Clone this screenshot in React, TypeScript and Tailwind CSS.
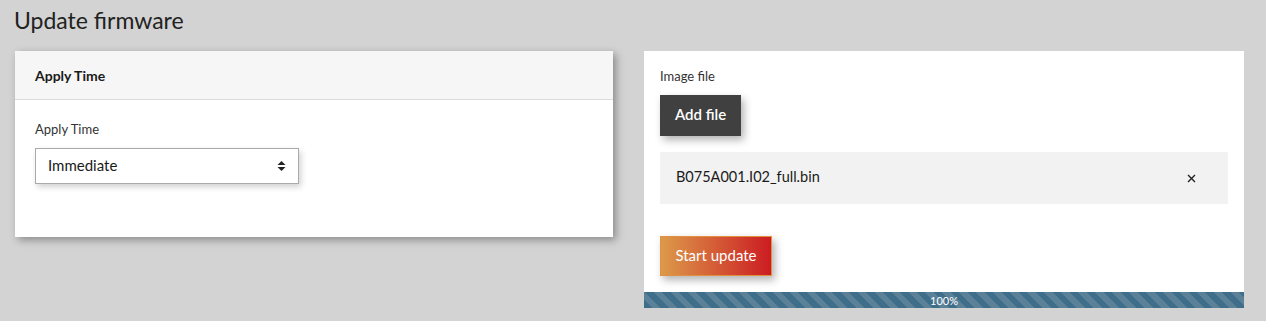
import React from "react";

export default function App() {
  return (
    <div className="w-[1266px] h-[321px] bg-[#d3d3d3] font-['Lato','Noto_Sans',sans-serif] text-[#1a1a1a] overflow-hidden">
      <h1 className="pl-[14px] pt-[5px] h-[51px] text-[23px] leading-[30px] text-[#222]">Update firmware</h1>
      <div className="flex items-start pl-[15px] gap-[31px]">
        <div className="w-[598px] h-[186px] bg-white shadow-[3px_3px_8px_rgba(0,0,0,0.35)] flex flex-col">
          <div className="h-[49px] bg-[#f6f6f6] border-b border-[#dcdcdc] flex items-center pl-[20px] text-[14px] font-bold">
            Apply Time
          </div>
          <div className="pl-[20px] pt-[21px]">
            <div className="text-[13px] text-[#333] leading-[16px]">Apply Time</div>
            <div className="mt-[11px] w-[264px] h-[36px] border border-[#aaa] bg-white shadow-[2px_3px_6px_rgba(0,0,0,0.18)] flex items-center justify-between pl-[12px] pr-[12px] pb-[2px] text-[15px]">
              <span>Immediate</span>
              <svg width="9" height="12" viewBox="0 0 9 12" className="mt-[2px]">
                <path d="M4.5 1 L8.5 5 H0.5 Z" fill="#222" />
                <path d="M4.5 11 L8.5 7 H0.5 Z" fill="#222" />
              </svg>
            </div>
          </div>
        </div>
        <div className="w-[600px] h-[257px] bg-white flex flex-col">
          <div className="flex-1 pl-[16px] pr-[16px] pt-[17px]">
            <div className="text-[13px] text-[#333] leading-[16px]">Image file</div>
            <button className="mt-[11px] w-[81px] h-[41px] bg-[#404040] text-white text-[15px] font-semibold shadow-[3px_4px_8px_rgba(0,0,0,0.3)] pb-[2px]">
              Add file
            </button>
            <div className="mt-[16px] h-[52px] bg-[#f2f2f2] flex items-center justify-between pl-[16px] pr-[32px] pb-[3px] text-[14.5px]">
              <span>B075A001.I02_full.bin</span>
              <svg width="9" height="9" viewBox="0 0 9 9" className="mt-[3px]">
                <path d="M1 1 L8 8 M8 1 L1 8" stroke="#222" strokeWidth="1.4" />
              </svg>
            </div>
            <button className="mt-[32px] w-[112px] h-[40px] bg-[linear-gradient(90deg,#dc9a4a,#cc1c22)] border border-[#e09040] text-white text-[15px] shadow-[3px_4px_8px_rgba(0,0,0,0.3)] pb-[2px]">
              Start update
            </button>
          </div>
          <div className="h-[16px] bg-[repeating-linear-gradient(45deg,#3f6e8a_0px,#3f6e8a_6px,#5b8199_6px,#5b8199_12px)] flex items-center justify-center text-[11px] leading-none text-white">
            100%
          </div>
        </div>
      </div>
    </div>
  );
}
